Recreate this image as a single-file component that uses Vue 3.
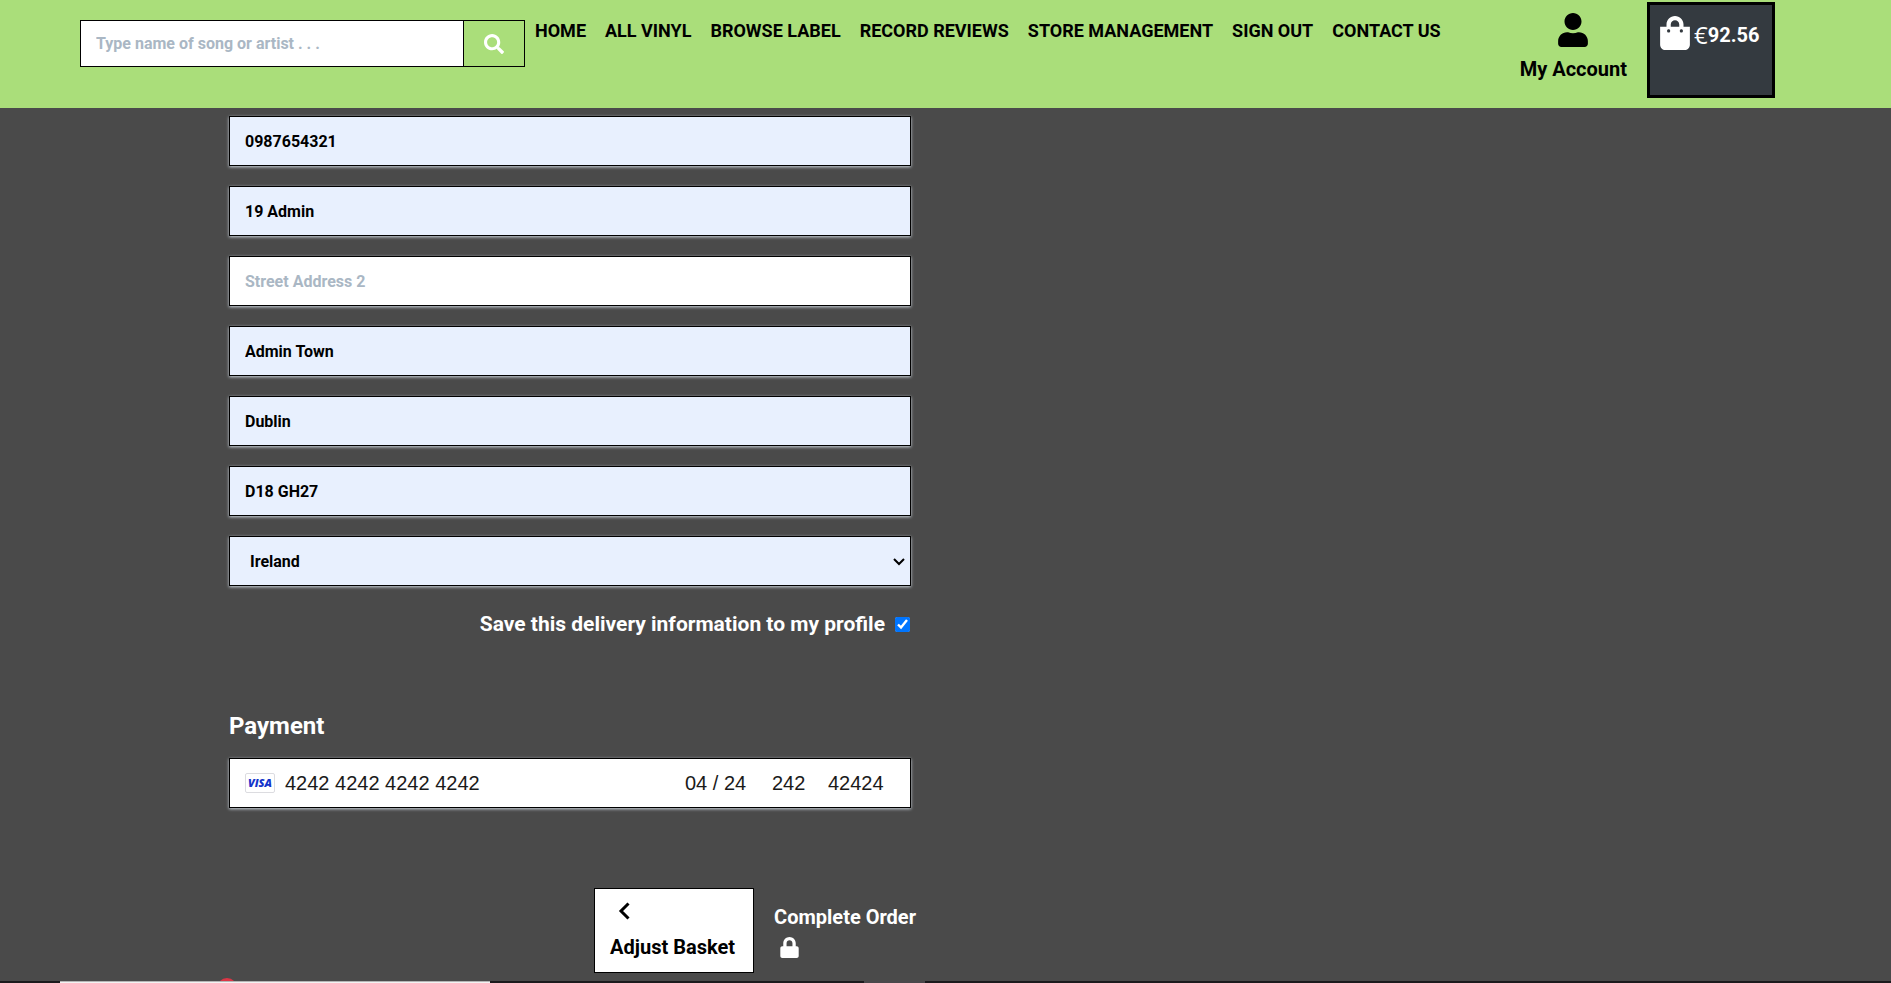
<script setup>
import { ref } from 'vue'

const links = ['HOME', 'ALL VINYL', 'BROWSE LABEL', 'RECORD REVIEWS', 'STORE MANAGEMENT', 'SIGN OUT', 'CONTACT US']
const fields = ref([
  { id: 'phone', label: 'Phone Number', value: '0987654321' },
  { id: 'address1', label: 'Street Address 1', value: '19 Admin' },
  { id: 'address2', label: 'Street Address 2', value: '' },
  { id: 'town', label: 'Town or City', value: 'Admin Town' },
  { id: 'county', label: 'County', value: 'Dublin' },
  { id: 'postcode', label: 'Postal Code', value: 'D18 GH27' },
])
const country = ref('IE')
const search = ref('')
const saveInfo = ref(true)
const card = ref({ number: '4242 4242 4242 4242', expiry: '04 / 24', cvc: '242', zip: '42424' })
</script>

<template>
  <div class="page">
    <header class="topbar">
      <form class="search" role="search" @submit.prevent>
        <input v-model="search" type="text" aria-label="Search" placeholder="Type name of song or artist . . ." />
        <button type="submit" aria-label="Search">
          <svg width="20" height="20" viewBox="0 0 512 512" fill="currentColor"><path d="M505 442.700 405.300 343c-4.500-4.500-10.600-7-17-7H372c27.600-35.300 44-79.700 44-128C416 93.100 322.900 0 208 0S0 93.100 0 208s93.100 208 208 208c48.300 0 92.700-16.400 128-44v16.300c0 6.400 2.500 12.500 7 17l99.700 99.700c9.400 9.400 24.600 9.400 33.900 0l28.300-28.300c9.400-9.400 9.400-24.600.1-34zM208 336c-70.700 0-128-57.200-128-128 0-70.700 57.200-128 128-128 70.700 0 128 57.200 128 128 0 70.700-57.200 128-128 128z" /></svg>
        </button>
      </form>
      <nav class="links" aria-label="Main">
        <a v-for="link in links" :key="link" href="#">{{ link }}</a>
      </nav>
      <a class="account" href="#">
        <svg width="30" height="34" viewBox="0 0 448 512" fill="currentColor"><path d="M224 256c70.700 0 128-57.300 128-128S294.700 0 224 0 96 57.300 96 128s57.300 128 128 128zm89.600 32h-16.700c-22.200 10.200-46.900 16-72.900 16s-50.600-5.800-72.900-16h-16.700C60.200 288 0 348.200 0 422.400V464c0 26.500 21.500 48 48 48h352c26.500 0 48-21.500 48-48v-41.600c0-74.200-60.200-134.400-134.400-134.400z" /></svg>
        <span>My Account</span>
      </a>
      <a class="bag" href="#">
        <svg width="30" height="34" viewBox="0 0 448 512" fill="currentColor"><path d="M352 160v-32C352 57.400 294.600 0 224 0S96 57.400 96 128v32H0v272c0 44.200 35.800 80 80 80h288c44.200 0 80-35.800 80-80V160h-96zm-192-32c0-35.300 28.700-64 64-64s64 28.700 64 64v32H160v-32zm160 120c-13.300 0-24-10.700-24-24s10.700-24 24-24 24 10.700 24 24-10.700 24-24 24zm-192 0c-13.300 0-24-10.700-24-24s10.700-24 24-24 24 10.700 24 24-10.700 24-24 24z" /></svg>
        <span class="total"><span class="euro">€</span>92.56</span>
      </a>
    </header>

    <main class="content">
      <form class="checkout" @submit.prevent>
        <input
          v-for="field in fields"
          :key="field.id"
          v-model="field.value"
          class="field"
          :class="{ filled: field.value }"
          type="text"
          :aria-label="field.label"
          :placeholder="field.label"
        />
        <div class="select-wrap">
          <select v-model="country" class="field filled" aria-label="Country">
            <option value="IE">Ireland</option>
            <option value="GB">United Kingdom</option>
          </select>
          <svg class="caret" width="12" height="8" viewBox="0 0 12 8" fill="none" stroke="currentColor" stroke-width="2"><path d="M1 1l5 5 5-5" /></svg>
        </div>

        <div class="save">
          <label for="save-info">Save this delivery information to my profile</label>
          <input id="save-info" v-model="saveInfo" type="checkbox" />
        </div>

        <h2>Payment</h2>
        <div class="field card">
          <svg width="30" height="20" viewBox="0 0 30 20" role="img" aria-label="Visa">
            <rect x="0.500" y="0.500" width="29" height="19" rx="1.500" fill="#fff" stroke="#dcdce0" />
            <text x="15" y="14" text-anchor="middle" class="visa">VISA</text>
          </svg>
          <input v-model="card.number" class="number" type="text" aria-label="Card number" />
          <input v-model="card.expiry" class="expiry" type="text" aria-label="Expiry date" />
          <input v-model="card.cvc" class="cvc" type="text" aria-label="CVC" />
          <input v-model="card.zip" class="zip" type="text" aria-label="ZIP code" />
        </div>

        <div class="actions">
          <a class="adjust" href="#">
            <svg width="12" height="18" viewBox="0 0 12 18" fill="none" stroke="currentColor" stroke-width="3"><path d="M10.500 1.500 3 9l7.500 7.500" /></svg>
            <span>Adjust Basket</span>
          </a>
          <button class="complete" type="submit">
            <span>Complete Order</span>
            <svg width="19" height="21" viewBox="0 0 448 512" fill="currentColor"><path d="M400 224h-24v-72C376 68.200 307.800 0 224 0S72 68.200 72 152v72H48c-26.500 0-48 21.500-48 48v192c0 26.500 21.500 48 48 48h352c26.500 0 48-21.500 48-48V272c0-26.500-21.500-48-48-48zm-104 0H152v-72c0-39.700 32.300-72 72-72s72 32.300 72 72v72z" /></svg>
          </button>
        </div>
      </form>
    </main>

    <div class="taskbar" aria-hidden="true">
      <i class="dot"></i>
      <i class="bar"></i>
      <i class="box"></i>
      <i class="active"></i>
    </div>
  </div>
</template>

<style>
body {
  margin: 0;
  background: #4a4a4a;
}
</style>

<style scoped>
.page,
.page * {
  box-sizing: border-box;
}
.page {
  min-height: 100vh;
  background: #4a4a4a;
  color: #fff;
  font-family: Roboto, "Liberation Sans", Arial, sans-serif;
  font-weight: 700;
}
svg {
  display: block;
  flex: none;
}
input,
button,
select {
  margin: 0;
  border-radius: 0;
  font: inherit;
}
a {
  color: inherit;
  text-decoration: none;
}
.topbar {
  display: flex;
  align-items: flex-start;
  height: 108px;
  padding: 0 116px 0 80px;
  background: #aade7a;
  color: #000;
}
.search {
  display: flex;
  flex: 0 1 445px;
  height: 47px;
  margin-top: 20px;
}
.search input {
  flex: 1;
  min-width: 0;
  padding: 0 15px;
  border: 1px solid #000;
  background: #fff;
  font-size: 16px;
}
.search button {
  display: flex;
  align-items: center;
  justify-content: center;
  width: 61px;
  border: 1px solid #000;
  border-left: 0;
  background: #aade7a;
  color: #fff;
}
input::placeholder {
  color: #aab7c4;
  opacity: 1;
}
.links {
  display: flex;
  gap: 19px;
  margin: 16px 0 0 10px;
  font-size: 18px;
  line-height: 30px;
  white-space: nowrap;
}
.account {
  display: flex;
  flex-direction: column;
  align-items: center;
  gap: 7px;
  margin: 13px 20px 0 auto;
  font-size: 20px;
  line-height: 30px;
  white-space: nowrap;
}
.bag {
  display: flex;
  flex: none;
  align-items: flex-start;
  gap: 4px;
  width: 128px;
  height: 96px;
  margin-top: 2px;
  padding: 11px 10px;
  border: 3px solid #000;
  background: #343a40;
  color: #fff;
}
.total {
  display: flex;
  font-size: 20px;
  line-height: 38px;
}
.euro {
  font-family: "Open Sans", sans-serif;
  font-weight: 400;
  font-size: 24px;
}
.content {
  display: grid;
  grid-template-columns: repeat(2, minmax(0, 1fr));
  gap: 69px;
  max-width: 1433px;
  margin: 0 auto;
}
.checkout {
  display: flex;
  flex-direction: column;
  gap: 20px;
  padding-top: 8px;
}
.field {
  display: block;
  width: 100%;
  height: 50px;
  padding: 0 15px;
  border: 1px solid #000;
  background: #fff;
  box-shadow: 0 1px 3px 0 #cfd7df;
  color: #000;
  font-size: 16px;
}
.filled {
  background: #e8f0fe;
}
.select-wrap {
  position: relative;
}
select.field {
  appearance: none;
  padding: 0 20px;
}
.caret {
  position: absolute;
  top: 22px;
  right: 6px;
  color: #000;
  pointer-events: none;
}
.save {
  display: flex;
  align-items: center;
  justify-content: flex-end;
  gap: 10px;
  height: 36px;
  font-size: 21px;
}
.save input {
  width: 15px;
  height: 15px;
  margin-right: 1px;
  accent-color: #0075ff;
}
h2 {
  margin: 46px 0 -6px;
  font-size: 24px;
  line-height: 36px;
}
.card {
  display: flex;
  align-items: center;
}
.card input {
  height: 30px;
  padding: 0;
  border: 0;
  background: transparent;
  color: #1a1a1a;
  font-family: "Liberation Sans", Arial, sans-serif;
  font-size: 20px;
  font-weight: 400;
}
.visa {
  fill: #1434cb;
  font: italic 800 11px "Open Sans", sans-serif;
}
.card .number {
  flex: 1;
  min-width: 0;
  margin-left: 10px;
}
.card .expiry {
  width: 87px;
}
.card .cvc {
  width: 56px;
}
.card .zip {
  width: 67px;
}
.actions {
  display: flex;
  justify-content: flex-end;
  align-items: flex-start;
  gap: 20px;
  margin-top: 60px;
  font-size: 20px;
  line-height: 30px;
  white-space: nowrap;
}
.adjust {
  display: flex;
  flex-direction: column;
  justify-content: space-between;
  width: 160px;
  height: 85px;
  padding: 13px 15px 10px;
  border: 1px solid #000;
  background: #fff;
  color: #000;
}
.adjust svg {
  margin-left: 8px;
}
.complete {
  display: flex;
  flex-direction: column;
  gap: 5px;
  margin: 14px -5px 0 0;
  padding: 0;
  border: 0;
  background: none;
  color: #fff;
  text-align: left;
}
.complete svg {
  margin-left: 6px;
}
.taskbar {
  position: fixed;
  right: 0;
  bottom: 0;
  left: 0;
  height: 5px;
  overflow: hidden;
}
.taskbar i {
  position: absolute;
}
.dot {
  top: 0;
  left: 217px;
  width: 20px;
  height: 20px;
  border-radius: 50%;
  background: #dc3545;
}
.bar {
  bottom: 0;
  width: 100%;
  height: 2px;
  background: #1c1a1d;
}
.box {
  bottom: 0;
  left: 60px;
  width: 430px;
  height: 2px;
  border-top: 1px solid #b5b5b5;
  background: #f2f2f2;
}
.active {
  bottom: 0;
  left: 864px;
  width: 61px;
  height: 2px;
  background: #4a484b;
}
</style>
